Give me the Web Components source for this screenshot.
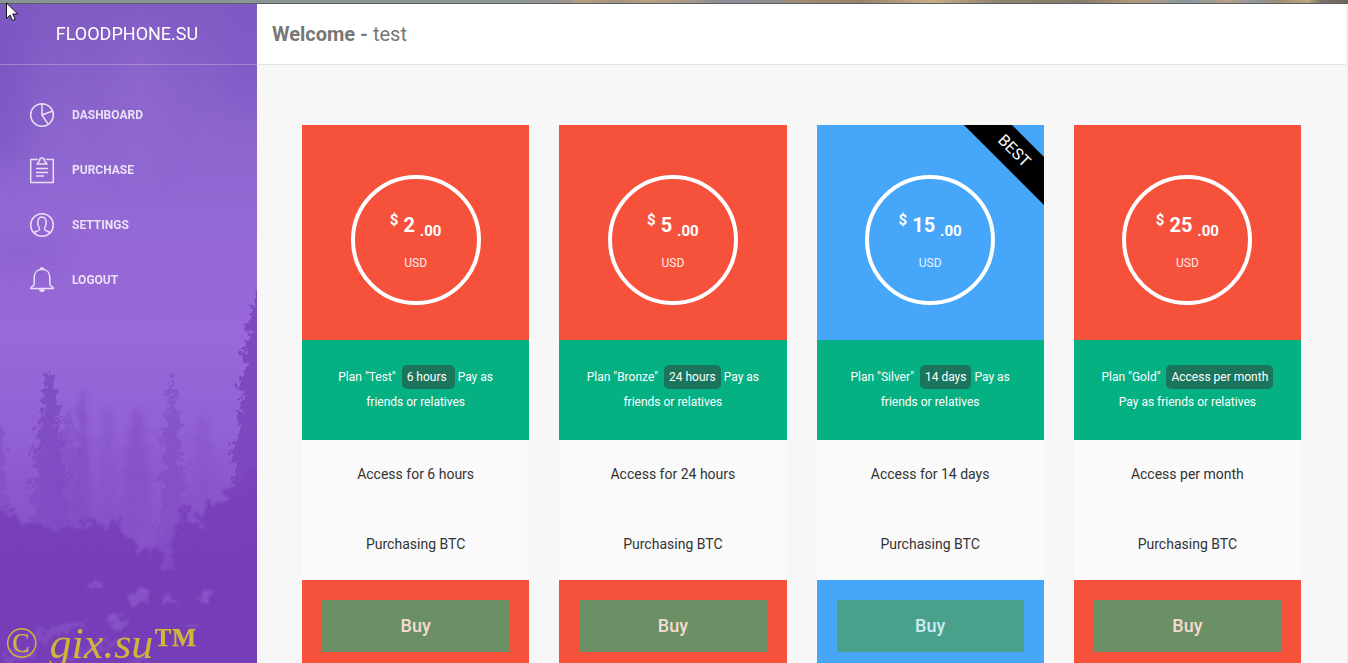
<!DOCTYPE html>
<html lang="en">
<head>
<meta charset="utf-8">
<meta name="viewport" content="width=device-width, initial-scale=1">
<title>FLOODPHONE.SU</title>
<style>
html, body { margin: 0; height: 100%; }
body { font-family: Roboto, sans-serif; background: #f7f7f7; overflow: hidden; }
</style>
</head>
<body>
<app-shell>
  <side-bar slot="side" brand="FLOODPHONE.SU">
    <nav-item icon="graph">Dashboard</nav-item>
    <nav-item icon="note">Purchase</nav-item>
    <nav-item icon="user">Settings</nav-item>
    <nav-item icon="bell">Logout</nav-item>
  </side-bar>
  <top-bar><b>Welcome -</b> test</top-bar>
  <plan-grid>
    <price-plan name="Test" term="6 hours&nbsp;" price="2" access="Access for 6 hours"></price-plan>
    <price-plan name="Bronze" term="24 hours" price="5" access="Access for 24 hours"></price-plan>
    <price-plan name="Silver" term="14 days" price="15" access="Access for 14 days" best></price-plan>
    <price-plan name="Gold" term="Access per month" price="25" access="Access per month"></price-plan>
  </plan-grid>
</app-shell>
<water-mark>© <i>gix.su</i><b>™</b></water-mark>
<mouse-pointer></mouse-pointer>

<script>
function define(name, build) {
  customElements.define(name, class extends HTMLElement {
    connectedCallback() {
      if (this.shadowRoot) return;
      this.attachShadow({ mode: 'open' }).innerHTML = build(this);
    }
  });
}

define('app-shell', () => `
<style>
  :host { display: flex; flex-direction: column; height: 100vh; overflow: hidden; }
  .strip { flex: none; height: 3px; border-bottom: 1px solid #5c5f5f;
    background: linear-gradient(90deg, #8b9495 0, #8b9696 38%, #9a9490 42%, #b59f83 43%, #a39480 46%, #b8a083 48%, #a89b87 51%, #8b9096 53%, #8b8f92 57%, #a08c74 59%, #97836c 64%, #b79c7e 67%, #c8ae87 69%, #8f8371 74%, #85796b 80%, #b09778 84%, #a49a8c 86%, #8297a4 88%, #b7a085 91%, #8d979c 93%, #a08d74 95%, #bfa580 97%, #7d7269 98%, #6c6560 100%); }
  .body { flex: 1; min-height: 0; display: flex; }
  main { flex: 1; min-width: 0; overflow: hidden; border-right: 2px solid #f1f1f1; }
</style>
<div class="strip"></div>
<div class="body"><slot name="side"></slot><main><slot></slot></main></div>`);

/* Builds the ragged outline of a conifer from its tip down to its base. */
function conifer(x, top, base, half, seed) {
  let s = seed;
  const rnd = () => (s = (s * 16807) % 2147483647) / 2147483647;
  const left = [], right = [];
  for (let y = top + 6; y < base; y += 6) {
    const t = (y - top) / (base - top);
    const w = 2 + half * Math.pow(t, 0.6);
    right.push([x + w * (0.5 + rnd() * 0.7), y + 3], [x + w * (0.35 + rnd() * 0.3), y + 5]);
    left.unshift([x - w * (0.35 + rnd() * 0.3), y + 5], [x - w * (0.5 + rnd() * 0.7), y + 3]);
  }
  const pts = [[x, top], ...right, [x + half * 0.7, base], [x - half * 0.7, base], ...left];
  return pts.map(p => p.map(n => n.toFixed(1)).join(',')).join(' ');
}

define('forest-scene', () => {
  const tree = (x, t, b, h, seed, o) => `<polygon points="${conifer(x, t, b, h, seed)}" fill="url(#bark)" opacity="${o}"/>`;
  return `
<style>:host { display: block; } svg { display: block; width: 100%; height: 100%; }</style>
<svg viewBox="0 0 257 660" preserveAspectRatio="xMidYMax slice" aria-hidden="true">
  <defs>
    <linearGradient id="sky" x1="0" y1="0" x2="0" y2="1">
      <stop offset="0" stop-color="#7f5bc3"/><stop offset=".16" stop-color="#8a64cc"/>
      <stop offset=".34" stop-color="#9469d5"/><stop offset=".5" stop-color="#9968d9"/>
      <stop offset=".66" stop-color="#9160d2"/><stop offset=".82" stop-color="#8750c8"/><stop offset="1" stop-color="#763db6"/>
    </linearGradient>
    <linearGradient id="bark" x1="0" y1="0" x2="0" y2="1">
      <stop offset="0" stop-color="#7a49be"/><stop offset=".5" stop-color="#7c48c0" stop-opacity=".9"/><stop offset="1" stop-color="#7c46bf" stop-opacity=".55"/>
    </linearGradient>
    <linearGradient id="ground" x1="0" y1="440" x2="0" y2="660" gradientUnits="userSpaceOnUse">
      <stop offset="0" stop-color="#7c45be"/><stop offset=".4" stop-color="#773fb9"/><stop offset="1" stop-color="#743cb6"/>
    </linearGradient>
    <filter id="mist" x="-30%" y="-20%" width="160%" height="140%"><feTurbulence type="fractalNoise" baseFrequency=".12" numOctaves="3" seed="4"/><feDisplacementMap in="SourceGraphic" scale="14" xChannelSelector="R" yChannelSelector="G"/><feGaussianBlur stdDeviation="2"/></filter>
    <filter id="haze" x="-60%" y="-60%" width="220%" height="220%"><feGaussianBlur stdDeviation="16"/></filter>
    <filter id="needles" x="-20%" y="-10%" width="140%" height="120%"><feTurbulence type="fractalNoise" baseFrequency=".16" numOctaves="4" seed="9"/><feDisplacementMap in="SourceGraphic" scale="18" xChannelSelector="R" yChannelSelector="G"/><feGaussianBlur stdDeviation=".7"/></filter>
    <filter id="bush" x="-10%" y="-10%" width="120%" height="120%"><feTurbulence type="fractalNoise" baseFrequency=".1" numOctaves="4" seed="3"/><feDisplacementMap in="SourceGraphic" scale="24" xChannelSelector="R" yChannelSelector="G"/><feGaussianBlur stdDeviation=".8"/></filter>
  </defs>
  <rect width="257" height="660" fill="url(#sky)"/>
  <g filter="url(#haze)">
    <ellipse cx="0" cy="80" rx="30" ry="90" fill="#7552c0" opacity=".6"/>
    <ellipse cx="250" cy="50" rx="26" ry="60" fill="#7c59c4" opacity=".6"/>
    <ellipse cx="20" cy="250" rx="46" ry="14" fill="#855cca" opacity=".7"/>
    <ellipse cx="140" cy="90" rx="22" ry="80" fill="#9670d2" opacity=".35"/>
    <ellipse cx="150" cy="500" rx="60" ry="40" fill="#9059d0" opacity=".5"/>
  </g>
  <g filter="url(#mist)">
    ${tree(83, 385, 520, 12, 5, .6)}
    ${tree(107, 402, 530, 12, 7, .3)}
    ${tree(137, 400, 530, 24, 9, .45)}
    ${tree(203, 408, 530, 22, 11, .25)}
  </g>
  <g filter="url(#needles)">
    ${tree(172, 370, 570, 20, 21, .55)}
    ${tree(50, 366, 535, 28, 23, .85)}
    ${tree(68, 405, 535, 24, 27, .4)}
    ${tree(0, 415, 530, 9, 29, .5)}
  </g>
  <g filter="url(#needles)" fill="#7a45bd" opacity=".85">
    <path d="M264 282l-10 14-3 14-5 12 4 10-8 20 5 12-9 18 6 10-6 26 2 16-12 18 10 8-8 20 34 20z"/>
  </g>
  <g filter="url(#bush)" fill="url(#ground)">
    <path d="M-20 680V500l22 6 14 10 30 8 24 2 14-8 14 4 10 5 8-10 5-1 4 14 8 6 4 16 7-8 8 6 4-8 6 2 4 18 5 4 4-14 2-18 3-30 5-4 5 18 6 6 5-6 3-20 6-2 6 12 8-16 7-8 14-10 30-30v240z"/>
  </g>
  <g filter="url(#bush)" fill="#9d6ad6">
    <path opacity=".45" d="M126 598l12-12 14 6-8 8zM192 596l14-10 14 2-12 10zM160 586l12 8 10 8-12-2zM108 616l12-6 8 14-14 4zM88 582l12-2 4 8z"/>
    <path opacity=".3" d="M28 630l60-14-20 14-34 10zM60 660l30-20 40-6-30 14zM0 652l40-10-14 12-26 14zM186 624l12-6v6zM128 660l14-8 12 10z"/>
  </g>
</svg>`;
});

define('side-bar', el => `
<style>
  :host { display: block; flex: none; width: 257px; position: relative; overflow: hidden; color: #fff; }
  forest-scene { position: absolute; inset: 0; }
  .over { position: relative; }
  .brand { box-sizing: border-box; height: 61px; padding-right: 3px; border-bottom: 1px solid rgba(255,255,255,.25);
    display: flex; align-items: center; justify-content: center; }
  .brand a { color: inherit; text-decoration: none; font-size: 18px; line-height: 30px; }
  nav { padding-top: 22px; }
</style>
<forest-scene></forest-scene>
<div class="over">
  <div class="brand"><a href="#">${el.getAttribute('brand')}</a></div>
  <nav><slot></slot></nav>
</div>`);

const icons = {
  graph: '<circle cx="14" cy="14" r="11.3"/><path d="M14 2.700V14l6.200 9.400M14 14l10.600-4"/>',
  note: '<path d="M9.500 3.500H2.700v23h22.600v-23h-6.800"/><path d="M9 8c0-2.200 2.700-1.700 2.700-3.700a2.300 2.300 0 0 1 4.600 0c0 2 2.700 1.500 2.700 3.700z"/><path d="M8.500 12.500h11M8.500 16.500h11M8.500 20h7"/>',
  user: '<circle cx="14" cy="14" r="11.3"/><path d="M5.800 21.800c1.700-1.700 5.200-1.500 5.700-3.400.3-1.200-.5-2.200-1.100-3.400-1-2.200-1.200-9 3.600-9s4.600 6.800 3.600 9c-.6 1.200-1.400 2.200-1.100 3.400.5 1.900 4 1.700 5.700 3.400"/>',
  bell: '<path d="M14 3.300c5 0 7.800 3.500 7.800 8.200v6.500c0 2.500 3.400 2.300 3.400 4.500H2.800c0-2.200 3.400-2 3.400-4.500v-6.500c0-4.700 2.800-8.200 7.800-8.200z"/><path d="M12.600 3a1.500 1.500 0 0 1 2.800 0z" fill="currentColor"/><path d="M11.800 24h4.400q-2.200 2.600-4.400 0z" fill="currentColor"/>'
};

define('nav-item', el => `
<style>
  :host { display: block; }
  a { display: flex; align-items: center; gap: 16px; height: 55px; padding-left: 28px; color: #fff; opacity: .8;
    text-decoration: none; text-transform: uppercase; font-size: 12px; font-weight: 700; line-height: 30px; }
  svg { display: block; width: 28px; height: 28px; overflow: visible; fill: none; stroke: currentColor; stroke-width: 1.5; stroke-linejoin: round; stroke-linecap: round; }
</style>
<a href="#"><svg viewBox="0 0 28 28" aria-hidden="true">${icons[el.getAttribute('icon')]}</svg><span><slot></slot></span></a>`);

define('top-bar', () => `
<style>
  :host { display: flex; align-items: center; box-sizing: border-box; height: 61px; padding: 0 15px;
    background: #fff; border-bottom: 1px solid #e3e3e3; color: #777; font-size: 20px; line-height: 30px; }
  span { white-space: pre-wrap; }
</style>
<span><slot></slot></span>`);

define('plan-grid', () => `
<style>
  :host { display: grid; grid-template-columns: repeat(4, minmax(0, 1fr)); gap: 30px; padding: 60px 45px; }
</style>
<slot></slot>`);

define('price-plan', el => {
  const at = n => el.getAttribute(n);
  return `
<style>
  :host { --tone: #f6513b; --buy: #6b9065; --buy-text: #f3dccf; display: block; position: relative; overflow: hidden; text-align: center; background: #fafafa; }
  :host([best]) { --tone: #46a6f9; --buy: #49a18c; --buy-text: #cdeaf5; }
  header, footer { background: var(--tone); color: #fff; }
  header { display: flex; justify-content: center; padding: 50px 0 35px; }
  .ring { box-sizing: border-box; width: 130px; height: 130px; border: 4px solid #fff; border-radius: 50%; padding-top: 31px; }
  .price { font-size: 20px; font-weight: 700; line-height: 30px; }
  sup, sub { font-size: 15px; line-height: 0; }
  sup { vertical-align: 7px; }
  sub { vertical-align: -4px; }
  .cur { font-size: 12px; line-height: 20px; padding-top: 13px; opacity: .9; }
  .ribbon { position: absolute; top: 9px; right: -40px; width: 140px; background: #000; color: #fff;
    font-size: 16px; line-height: 34px; transform: rotate(45deg); }
  .plan { margin: 0; padding: 25px; background: #05b083; color: #fff; font-size: 12px; line-height: 25px; }
  .plan span { background: #1b755c; border-radius: 5px; padding: 5px; white-space: nowrap; }
  ul { list-style: none; margin: 0; padding: 0; color: #333; font-size: 14px; line-height: 20px; }
  li { padding: 24px 0 26px; }
  footer { padding: 20px; }
  button { display: block; width: 100%; height: 52px; border: 0; border-radius: 0; padding: 0; background: var(--buy); color: var(--buy-text);
    font: 500 18px/26px Roboto, sans-serif; cursor: pointer; }
</style>
<header>
  <div class="ring">
    <div class="price"><sup>$</sup> ${at('price')} <sub>.00</sub></div>
    <div class="cur">USD</div>
  </div>
</header>
${el.hasAttribute('best') ? '<div class="ribbon">BEST</div>' : ''}
<p class="plan">Plan "${at('name')}"&nbsp; <span>${at('term')}</span> Pay as friends or relatives</p>
<ul><li>${at('access')}</li><li>Purchasing BTC</li></ul>
<footer><button type="button">Buy</button></footer>`;
});

define('water-mark', () => `
<style>
  :host { position: absolute; left: 5px; bottom: 0; color: #d0b53a; white-space: nowrap;
    font: 44px/38px "Liberation Serif", serif; pointer-events: none; }
</style>
<slot></slot>`);

define('mouse-pointer', () => `
<style>
  :host { position: absolute; left: 6px; top: 2px; pointer-events: none; }
  svg { display: block; }
</style>
<svg width="13" height="20" viewBox="0 0 13 20" aria-hidden="true"><path d="M.5 1v15.500l3.600-3.400 2.500 5.400 2.600-1.200-2.400-5.300h5z" fill="#fff" stroke="#111" stroke-width="1"/></svg>`);
</script>
</body>
</html>
